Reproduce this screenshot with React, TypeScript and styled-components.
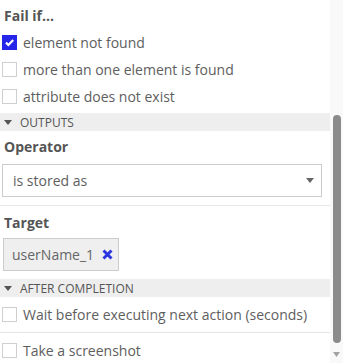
import styled, { createGlobalStyle } from 'styled-components';

const GlobalStyle = createGlobalStyle`
    html, body {
        margin: 0;
        padding: 0;
        background: #fff;
    }

    body {
        font-family: 'Open Sans', 'Liberation Sans', sans-serif;
        color: #5e5e5e;
    }
`;

const StyledPanel = styled.div`
    display: flex;
    width: 343px;
    height: 363px;
    overflow: hidden;
`;

const Content = styled.div`
    display: flex;
    flex-direction: column;
    width: 330px;
    flex-shrink: 0;

    & > * {
        flex-shrink: 0;
    }
`;

const Title = styled.div`
    padding: 5px 4px 0;
    margin-bottom: 2px;
    line-height: 22px;
    font-size: 14px;
    font-weight: bold;
    color: #555;
`;

const Label = styled.div<{ $top: number }>`
    margin-top: ${p => p.$top}px;
    padding-left: 4px;
    line-height: 20px;
    font-size: 14px;
    font-weight: bold;
    color: #555;
`;

const CheckRow = styled.label<{ $height?: number; $divider?: boolean }>`
    display: flex;
    align-items: center;
    gap: 6px;
    height: ${p => p.$height ?? 27}px;
    padding-left: 2px;
    font-size: 14px;
    border-bottom: ${p => (p.$divider ? '1px solid #e6e6e6' : 'none')};
`;

const Box = styled.span<{ $checked?: boolean }>`
    display: flex;
    align-items: center;
    justify-content: center;
    width: 15px;
    height: 15px;
    box-sizing: border-box;
    border: 1px solid ${p => (p.$checked ? '#2626ea' : '#cfcfcf')};
    background: ${p => (p.$checked ? '#2626ea' : '#fff')};
`;

const SectionBar = styled.div<{ $top: number }>`
    display: flex;
    align-items: center;
    gap: 8px;
    height: 18px;
    margin-top: ${p => p.$top}px;
    padding-left: 4px;
    background: #eee;
    font-size: 12px;
    font-weight: 500;
    text-transform: uppercase;
    color: #555;

    svg {
        flex-shrink: 0;
    }
`;

const Select = styled.div`
    display: flex;
    align-items: center;
    justify-content: space-between;
    box-sizing: border-box;
    width: 320px;
    height: 33px;
    margin: 7px 0 0 2px;
    padding: 0 7px 0 10px;
    border: 1px solid #ccc;
    font-size: 14px;
`;

const Divider = styled.div`
    height: 1px;
    margin-top: 8px;
    background: #e8e8e8;
`;

const Chip = styled.div`
    display: flex;
    align-items: center;
    gap: 8px;
    box-sizing: border-box;
    width: 116px;
    height: 33px;
    margin: 5px 0 0 3px;
    padding-left: 8px;
    background: #efefef;
    border: 1px solid #ccc;
    font-size: 14px;
    color: #666;
`;

const Scrollbar = styled.div`
    display: flex;
    flex-direction: column;
    align-items: center;
    width: 13px;
    background: #f9f9f9;
`;

const Thumb = styled.div`
    width: 8px;
    height: 228px;
    margin-top: 115px;
    border-radius: 4px;
    background: #8b8b8b;
`;

const Arrow = styled.svg`
    margin-top: 9px;
`;

const Caret = () => (
    <svg width="8" height="5" viewBox="0 0 8 5">
        <path d="M0 0h8L4 5z" fill="#555" />
    </svg>
);

const Check = ({ label, checked }: { label: string; checked?: boolean }) => (
    <CheckRow>
        <Box $checked={checked}>
            {checked && (
                <svg width="11" height="11" viewBox="0 0 11 11">
                    <path
                        d="M2 5.6l2.4 2.4L9.2 3"
                        fill="none"
                        stroke="#fff"
                        strokeWidth="2.2"
                    />
                </svg>
            )}
        </Box>
        {label}
    </CheckRow>
);

export const App = () => (
    <StyledPanel>
        <GlobalStyle />
        <Content>
            <Title>Fail if...</Title>
            <Check label="element not found" checked />
            <Check label="more than one element is found" />
            <Check label="attribute does not exist" />

            <SectionBar $top={3}>
                <Caret />
                Outputs
            </SectionBar>
            <Label $top={6}>Operator</Label>
            <Select>
                is stored as
                <svg width="8" height="5" viewBox="0 0 8 5">
                    <path d="M0 0h8L4 5z" fill="#666" />
                </svg>
            </Select>
            <Divider />
            <Label $top={7}>Target</Label>
            <Chip>
                userName_1
                <svg width="11" height="11" viewBox="0 0 11 11">
                    <path
                        d="M1.5 1.5l8 8M9.5 1.5l-8 8"
                        stroke="#2a36e0"
                        strokeWidth="3"
                    />
                </svg>
            </Chip>

            <SectionBar $top={8}>
                <Caret />
                After completion
            </SectionBar>
            <CheckRow $height={35} $divider>
                <Box />
                Wait before executing next action (seconds)
            </CheckRow>
            <CheckRow $height={34}>
                <Box />
                Take a screenshot
            </CheckRow>
        </Content>
        <Scrollbar>
            <Thumb />
            <Arrow width="7" height="5" viewBox="0 0 7 5">
                <path d="M0 0h7L3.5 5z" fill="#a3a3a3" />
            </Arrow>
        </Scrollbar>
    </StyledPanel>
);

export default App;
